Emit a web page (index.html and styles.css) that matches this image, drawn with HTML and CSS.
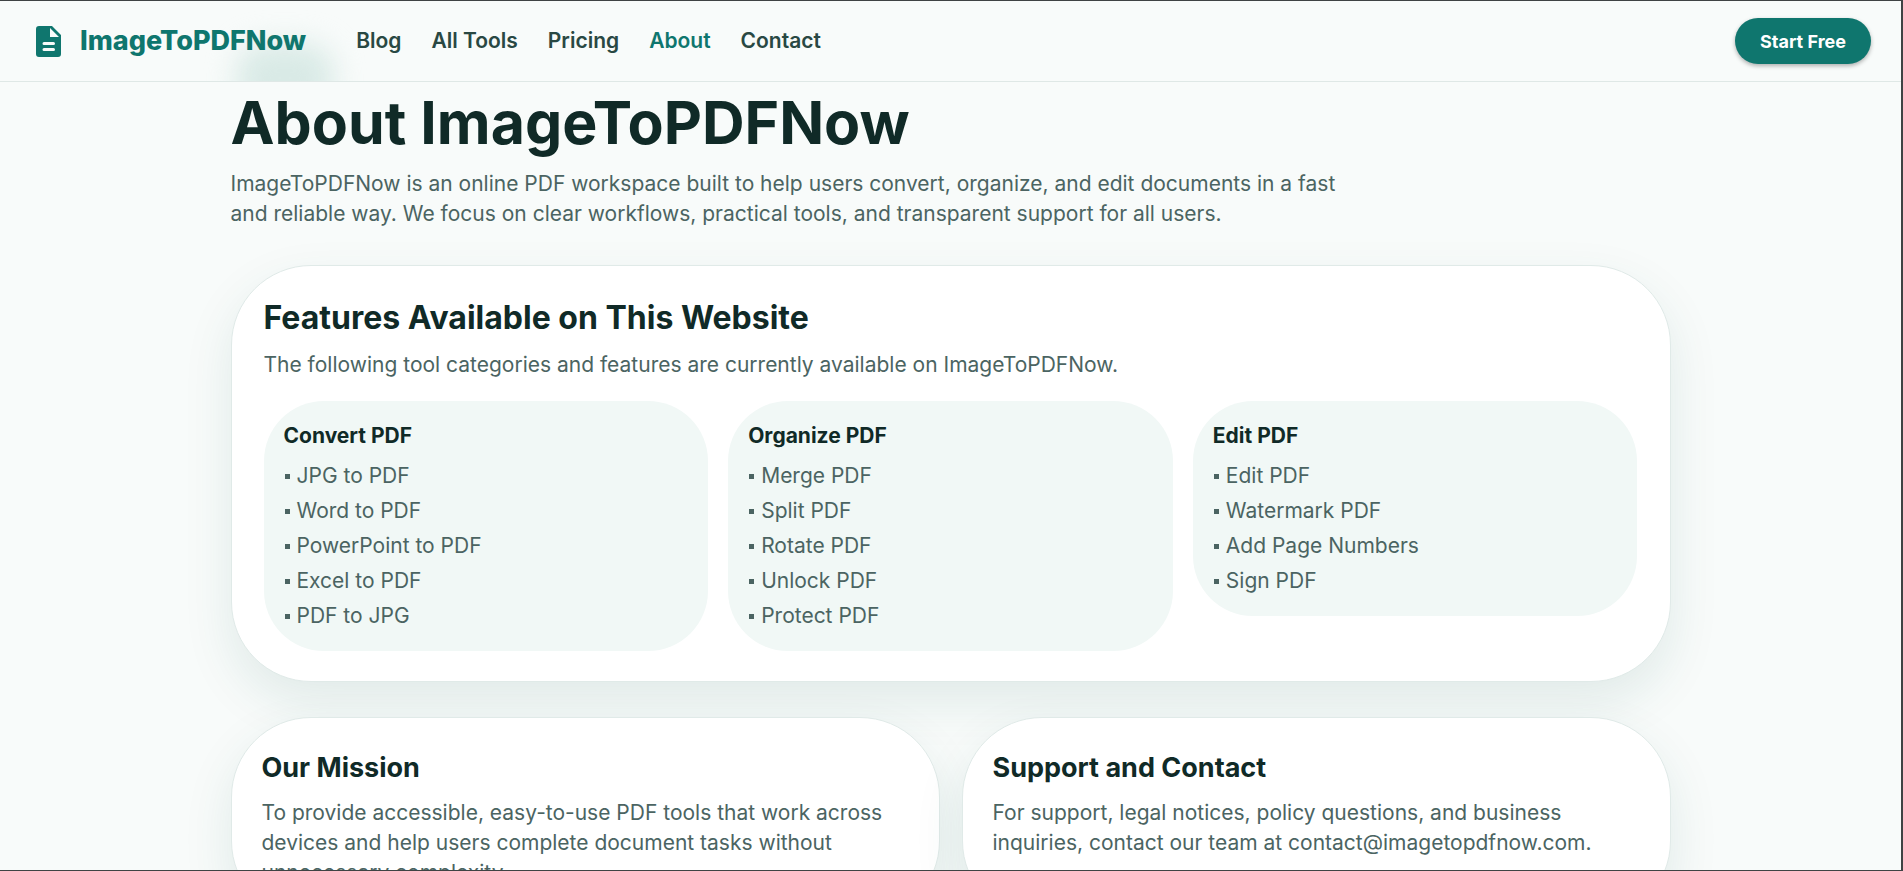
FILE: index.html
```html
<!DOCTYPE html>
<html lang="en">
<head>
    <meta charset="UTF-8">
    <meta name="viewport" content="width=device-width, initial-scale=1.0">
    <title>About ImageToPDFNow</title>
    <link rel="stylesheet" href="styles.css">
</head>
<body>
    <header class="header">
        <a class="brand" href="#">
            <svg class="brand-icon" viewBox="0 0 25 31" aria-hidden="true">
                <path fill="#0f766e" fill-rule="evenodd" d="M3 0H16L25 9V28a3 3 0 0 1-3 3H3a3 3 0 0 1-3-3V3a3 3 0 0 1 3-3ZM14 2V11H23ZM8 16a1.500 1.500 0 0 0 0 3H17.500a1.500 1.500 0 0 0 0-3ZM8 22a1.500 1.500 0 0 0 0 3H17.500a1.500 1.500 0 0 0 0-3Z"/>
            </svg>
            <span>ImageToPDFNow</span>
        </a>
        <nav class="nav">
            <a href="#">Blog</a>
            <a href="#">All Tools</a>
            <a href="#">Pricing</a>
            <a href="#" class="active">About</a>
            <a href="#">Contact</a>
        </nav>
        <button class="btn" type="button">Start Free</button>
    </header>

    <main class="main">
        <div class="container">
            <h1>About ImageToPDFNow</h1>
            <p class="intro">ImageToPDFNow is an online PDF workspace built to help users convert, organize, and edit documents in a fast and reliable way. We focus on clear workflows, practical tools, and transparent support for all users.</p>

            <section class="card features">
                <h2>Features Available on This Website</h2>
                <p>The following tool categories and features are currently available on ImageToPDFNow.</p>
                <div class="tools">
                    <div class="tool">
                        <h3>Convert PDF</h3>
                        <ul>
                            <li>JPG to PDF</li>
                            <li>Word to PDF</li>
                            <li>PowerPoint to PDF</li>
                            <li>Excel to PDF</li>
                            <li>PDF to JPG</li>
                        </ul>
                    </div>
                    <div class="tool">
                        <h3>Organize PDF</h3>
                        <ul>
                            <li>Merge PDF</li>
                            <li>Split PDF</li>
                            <li>Rotate PDF</li>
                            <li>Unlock PDF</li>
                            <li>Protect PDF</li>
                        </ul>
                    </div>
                    <div class="tool">
                        <h3>Edit PDF</h3>
                        <ul>
                            <li>Edit PDF</li>
                            <li>Watermark PDF</li>
                            <li>Add Page Numbers</li>
                            <li>Sign PDF</li>
                        </ul>
                    </div>
                </div>
            </section>

            <div class="columns">
                <section class="card info">
                    <h2>Our Mission</h2>
                    <p>To provide accessible, easy-to-use PDF tools that work across devices and help users complete document tasks without unnecessary complexity.</p>
                </section>
                <section class="card info">
                    <h2>Support and Contact</h2>
                    <p>For support, legal notices, policy questions, and business inquiries, contact our team at contact@imagetopdfnow.com.</p>
                </section>
            </div>
        </div>
    </main>
</body>
</html>
```

FILE: styles.css
```css
* {
    box-sizing: border-box;
    margin: 0;
    padding: 0;
}

body {
    display: flex;
    flex-direction: column;
    height: 100vh;
    overflow: hidden;
    border: solid #3f4344;
    border-width: 1px 2px 1px 0;
    background: #f8fbfa;
    color: #4b6462;
    font-family: Inter, "Liberation Sans", sans-serif;
    font-size: 21px;
    line-height: 30px;
}

a {
    color: inherit;
    text-decoration: none;
}

/* header */
.header {
    position: relative;
    display: flex;
    align-items: center;
    flex-shrink: 0;
    height: 81px;
    padding: 0 30px 0 36px;
    border-bottom: 1px solid #dfe8e6;
    overflow: hidden;
}

.header::before {
    content: "";
    position: absolute;
    left: 236px;
    top: 42px;
    width: 98px;
    height: 70px;
    border-radius: 30px;
    background: #d9eae6;
    filter: blur(14px);
}

.brand,
.nav,
.btn {
    position: relative;
}

.brand {
    display: flex;
    align-items: center;
    gap: 19px;
    margin-right: 50px;
    color: #0f766e;
    font-size: 27px;
    font-weight: 800;
}

.brand-icon {
    width: 25px;
    height: 31px;
}

.nav {
    display: flex;
    gap: 30px;
    color: #294843;
    font-weight: 600;
}

.nav .active {
    color: #0f766e;
}

.btn {
    height: 46px;
    margin-left: auto;
    padding: 0 25px;
    border: none;
    border-radius: 23px;
    background: #0f766e;
    box-shadow: 0 2px 4px rgba(0, 0, 0, 0.3);
    color: #fff;
    font-family: inherit;
    font-size: 18px;
    font-weight: 700;
    cursor: pointer;
}

/* page */
.main {
    flex: 1;
    min-height: 0;
    padding: 11px 24px;
    overflow: hidden;
}

.container {
    max-width: 1440px;
    margin: 0 auto;
}

h1,
h2,
h3 {
    color: #102a27;
    font-weight: 700;
}

h1 {
    font-size: 59px;
    line-height: 60px;
}

.intro {
    max-width: 1140px;
    margin: 16px 0 36px;
}

.card {
    border: 1px solid #e0eae8;
    border-radius: 80px;
    background: #fff;
    box-shadow: 0 20px 50px rgba(15, 90, 80, 0.1);
}

.features {
    padding: 32px 32px 30px;
}

.features h2 {
    margin-bottom: 12px;
    font-size: 32px;
    line-height: 40px;
}

.tools {
    display: grid;
    grid-template-columns: repeat(3, 1fr);
    align-items: start;
    gap: 20px;
    margin-top: 21px;
}

.tool {
    padding: 20px;
    border-radius: 60px;
    background: #f1f8f6;
}

.tool h3 {
    margin-bottom: 10px;
    font-size: 21px;
}

.tool ul {
    display: flex;
    flex-direction: column;
    gap: 5px;
    list-style: none;
}

.tool li {
    display: flex;
    align-items: center;
    gap: 7px;
}

.tool li::before {
    content: "";
    width: 5px;
    height: 5px;
    margin-left: 1px;
    background: #4b6462;
}

.columns {
    display: grid;
    grid-template-columns: repeat(2, 1fr);
    gap: 22px;
    margin-top: 35px;
}

.info {
    padding: 32px 30px;
}

.info h2 {
    margin-bottom: 12px;
    font-size: 27px;
    line-height: 36px;
}
```
